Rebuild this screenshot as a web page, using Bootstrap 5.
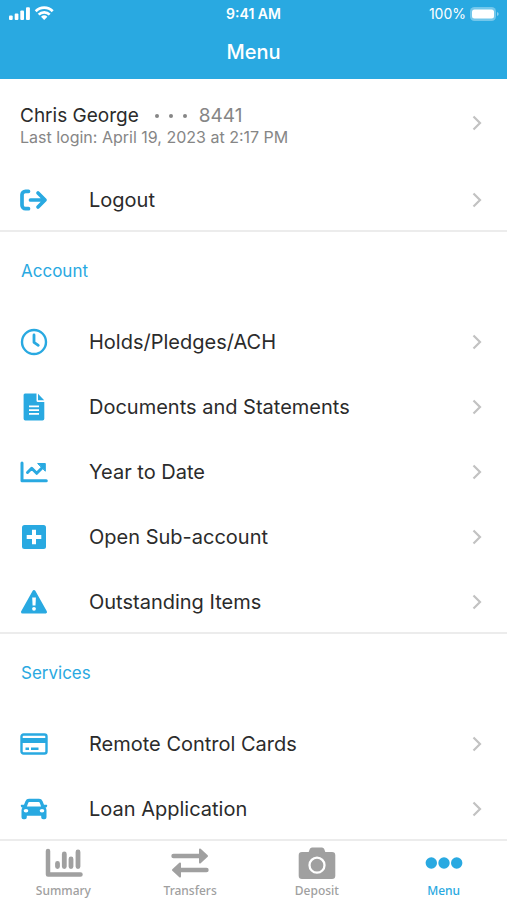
<!DOCTYPE html>
<html lang="en">
<head>
<meta charset="utf-8">
<meta name="viewport" content="width=device-width, initial-scale=1">
<title>Menu</title>
<link href="https://cdn.jsdelivr.net/npm/bootstrap@5.3.0/dist/css/bootstrap.min.css" rel="stylesheet">
<style>
  :root { --brand: #29a9e1; --ink: #2b2b2b; --muted: #868686; --tab: #a0a0a0; }
  body { font-family: Inter, "Liberation Sans", sans-serif; color: var(--ink); background: #fff; }
  .app-header { background: var(--brand); color: #fff; }
  .status-bar { height: 28px; font-size: 14px; line-height: 20px; padding: 0 8px; }
  .status-bar > div { flex: 1 1 0; }
  .page-title { height: 51px; font-size: 20px; line-height: 24px; padding-top: 12px; font-weight: 500; }
  .app-body { min-height: 0; scrollbar-width: none; }
  .app-body::-webkit-scrollbar { display: none; }
  .menu-section { box-shadow: inset 0 -2px #ececec; }
  .section-title { height: 77px; padding: 0 21px; font-size: 17px; line-height: 24px; color: var(--brand); }
  .menu-row { height: 65px; padding: 0 25px 0 20px; font-size: 20px; line-height: 24px; color: var(--ink); }
  .menu-row .glyph { width: 28px; height: 28px; margin-right: 41px; color: var(--brand); }
  .user-row { height: 88px; }
  .user-text { padding-top: 6px; }
  .user-name { font-size: 19px; line-height: 22px; }
  .user-dots { gap: 10px; margin: 0 12px 0 16px; }
  .user-dots i { width: 4px; height: 4px; background: var(--muted); }
  .user-login { font-size: 16px; line-height: 20px; }
  .soft { color: var(--muted); }
  .chevron { width: 10px; height: 16px; color: #c2c2c2; }
  .tab-bar { height: 61px; border-top: 2px solid #ececec; font-family: "Noto Sans", sans-serif; }
  .tab-bar a { color: var(--tab); font-size: 12px; line-height: 16px; padding-top: 3px; gap: 3px; font-weight: 500; }
  .tab-bar a.active { color: var(--brand); }
  .tab-bar svg { width: 40px; height: 36px; }
</style>
<script src="https://cdn.jsdelivr.net/npm/bootstrap@5.3.0/dist/js/bootstrap.bundle.min.js"></script>
</head>
<body>
<svg class="d-none" aria-hidden="true">
  <symbol id="chev" viewBox="0 0 10 16"><path d="M1.500 1.500 8 8l-6.500 6.500" fill="none" stroke="currentColor" stroke-width="2.200"/></symbol>
</svg>
<div class="d-flex flex-column vh-100">
  <header class="app-header">
    <div class="status-bar d-flex align-items-center">
      <div class="d-flex align-items-center">
        <svg width="46" height="16" viewBox="0 0 46 16" fill="#fff" aria-label="Signal and Wi-Fi">
          <rect x="1" y="9.500" width="3.700" height="4.500" rx="1"/><rect x="6.700" y="7.500" width="3.700" height="6.500" rx="1"/>
          <rect x="12.300" y="4.500" width="3.700" height="9.500" rx="1"/><rect x="18" y="1.200" width="3.900" height="12.800" rx="1"/>
          <g fill="none" stroke="#fff" stroke-width="2.700"><path d="M27.700 5.200a12 12 0 0 1 17 0"/><path d="M30.700 8.600a7.700 7.700 0 0 1 11 0"/></g>
          <path d="M33 10.700a4.700 4.700 0 0 1 6.400 0L36.200 13.900z"/>
        </svg>
      </div>
      <span class="fw-semibold">9:41 AM</span>
      <div class="d-flex align-items-center justify-content-end gap-1">
        <span>100%</span>
        <svg width="29" height="14" viewBox="0 0 29 14" aria-label="Battery full">
          <rect x="0" y="0" width="26" height="14" rx="4.500" fill="#fff" opacity=".35"/><rect x="2" y="2.500" width="22" height="9" rx="2.500" fill="#fff"/>
          <path d="M27 5v4q1.700-.5 1.700-2T27 5z" fill="#fff" opacity=".45"/>
        </svg>
      </div>
    </div>
    <h1 class="page-title text-center m-0">Menu</h1>
  </header>

  <main class="app-body flex-fill overflow-auto">
    <section class="menu-section">
      <a href="#profile" class="menu-row user-row d-flex align-items-center text-decoration-none">
        <span class="user-text flex-fill">
          <span class="user-name d-flex align-items-center">Chris George
            <span class="user-dots d-flex"><i class="rounded-circle"></i><i class="rounded-circle"></i><i class="rounded-circle"></i></span>
            <span class="soft">8441</span></span>
          <span class="user-login soft d-block">Last login: April 19, 2023 at 2:17 PM</span>
        </span>
        <svg class="chevron"><use href="#chev"/></svg>
      </a>
      <button type="button" class="menu-row d-flex align-items-center w-100 border-0 bg-transparent text-start">
        <svg class="glyph" viewBox="0 0 28 28" fill="none" stroke="currentColor" stroke-width="3.700" stroke-linecap="round" stroke-linejoin="round"><path d="M8.500 5.300H5.500a3.500 3.500 0 0 0-3.500 3.500v10.400a3.500 3.500 0 0 0 3.500 3.500h3M10.500 14h14M18 7l7 7-7 7"/></svg>
        <span class="flex-fill">Logout</span><svg class="chevron"><use href="#chev"/></svg>
      </button>
    </section>

    <section class="menu-section">
      <h2 class="section-title d-flex align-items-center m-0 fw-normal">Account</h2>
      <a href="#holds" class="menu-row d-flex align-items-center text-decoration-none">
        <svg class="glyph" viewBox="0 0 28 28" fill="none" stroke="currentColor"><circle cx="14" cy="14" r="12" stroke-width="2.400"/><path d="M14 7v7.300l4.300 3" stroke-width="2.800" stroke-linecap="round" stroke-linejoin="round"/></svg>
        <span class="flex-fill">Holds/Pledges/ACH</span><svg class="chevron"><use href="#chev"/></svg>
      </a>
      <a href="#documents" class="menu-row d-flex align-items-center text-decoration-none">
        <svg class="glyph" viewBox="0 0 28 28" fill="currentColor"><path d="M5 .5h11.500V7.500q0 1.500 1.500 1.500h6.300v16.700q0 1.800-1.800 1.800H5.300q-1.700 0-1.700-1.700V2q0-1.500 1.400-1.500z"/><path d="M18 .7 24.200 7.300H18z"/><path d="M9 13.300h10M9 17.100h10M9 20.900h10" stroke="#fff" stroke-width="1.700"/></svg>
        <span class="flex-fill">Documents and Statements</span><svg class="chevron"><use href="#chev"/></svg>
      </a>
      <a href="#ytd" class="menu-row d-flex align-items-center text-decoration-none">
        <svg class="glyph" viewBox="0 0 28 28" fill="none" stroke="currentColor" stroke-width="3" stroke-linecap="round" stroke-linejoin="round"><path d="M2 5v17.700h24.300"/><path d="m7.500 14.500 4.200-4.200 5 5 6-6"/><path d="M18 5.500h7.300v7.300z" fill="currentColor" stroke-width="1"/></svg>
        <span class="flex-fill">Year to Date</span><svg class="chevron"><use href="#chev"/></svg>
      </a>
      <a href="#open" class="menu-row d-flex align-items-center text-decoration-none">
        <svg class="glyph" viewBox="0 0 28 28"><rect x="2" y="2" width="24" height="24" rx="2.500" fill="currentColor"/><path d="M14 6.700v14.600M6.700 14h14.600" stroke="#fff" stroke-width="4"/></svg>
        <span class="flex-fill">Open Sub-account</span><svg class="chevron"><use href="#chev"/></svg>
      </a>
      <a href="#outstanding" class="menu-row d-flex align-items-center text-decoration-none">
        <svg class="glyph" viewBox="0 0 28 28"><path d="M14 3.500 25.500 24H2.500z" fill="currentColor" stroke="currentColor" stroke-width="3" stroke-linejoin="round"/><path d="M12.200 9.500h3.700l-.4 8h-2.900z" fill="#fff"/><circle cx="14" cy="20.800" r="1.900" fill="#fff"/></svg>
        <span class="flex-fill">Outstanding Items</span><svg class="chevron"><use href="#chev"/></svg>
      </a>
    </section>

    <section>
      <h2 class="section-title d-flex align-items-center m-0 fw-normal">Services</h2>
      <a href="#cards" class="menu-row d-flex align-items-center text-decoration-none">
        <svg class="glyph" viewBox="0 0 28 28"><rect x="1.500" y="4.500" width="25" height="19" rx="2" fill="none" stroke="currentColor" stroke-width="2.400"/><path d="M1.500 8v5h25V8z" fill="currentColor"/><path d="M5.500 18.700h3.500M11 18.700h7.500" stroke="currentColor" stroke-width="2.400"/></svg>
        <span class="flex-fill">Remote Control Cards</span><svg class="chevron"><use href="#chev"/></svg>
      </a>
      <a href="#loan" class="menu-row d-flex align-items-center text-decoration-none">
        <svg class="glyph" viewBox="0 0 28 28"><path d="M9 3.800h10q2.600 0 3.600 2.400L24 9.700h2.500q.9 0 .7 1l-.3 1q-.2.700-1 .7h-.4q1 1.200 1 3v6.800q0 2-2 2h-1.300q-2 0-2-2v-1.400H6.800v1.400q0 2-2 2H3.500q-2 0-2-2v-6.800q0-1.800 1-3h-.4q-.8 0-1-.7l-.3-1q-.2-1 .7-1H4l1.400-3.500Q6.400 3.800 9 3.800z" fill="currentColor"/><path d="M9.300 7h9.400q.7 0 1 .7l1.400 3.700H6.900l1.400-3.700q.3-.7 1-.7z" fill="#fff"/><ellipse cx="6" cy="15.800" rx="2.300" ry="1.700" fill="#fff"/><ellipse cx="22" cy="15.800" rx="2.300" ry="1.700" fill="#fff"/></svg>
        <span class="flex-fill">Loan Application</span><svg class="chevron"><use href="#chev"/></svg>
      </a>
    </section>
  </main>

  <nav class="tab-bar row g-0 flex-shrink-0 bg-white" aria-label="Main">
    <a href="#summary" class="col d-flex flex-column align-items-center text-decoration-none">
      <svg viewBox="0 0 40 36" fill="none" stroke="currentColor" stroke-linecap="round" stroke-linejoin="round"><path d="M5 7v23.500h32.500" stroke-width="4.500"/><path d="M14.500 19.500v3M21.300 10v12.500M28 15v7.500M35 8v14.500" stroke-width="4.800"/></svg>
      <span>Summary</span></a>
    <a href="#transfers" class="col d-flex flex-column align-items-center text-decoration-none">
      <svg viewBox="0 0 40 36" fill="currentColor" stroke="currentColor" stroke-linecap="round" stroke-linejoin="round"><path d="M3.500 12H31M9 26h27.500" stroke-width="4.400"/><path d="m30 5.500 7 6.500-7 6.500zM10 19.500 3 26l7 6.500z" stroke-width="2"/></svg>
      <span>Transfers</span></a>
    <a href="#deposit" class="col d-flex flex-column align-items-center text-decoration-none">
      <svg viewBox="0 0 40 36"><path d="M5 8h6.700l1.100-2.900Q13.400 3.500 15 3.500h10q1.600 0 2.200 1.600L28.300 8H35q3.300 0 3.300 3.300v20.400q0 3.300-3.300 3.300H5q-3.300 0-3.300-3.300V11.300Q1.700 8 5 8z" fill="currentColor"/><circle cx="20" cy="21.200" r="7.500" fill="none" stroke="#fff" stroke-width="2.300"/></svg>
      <span>Deposit</span></a>
    <a href="#menu" class="active col d-flex flex-column align-items-center text-decoration-none" aria-current="page">
      <svg viewBox="0 0 40 36" fill="currentColor"><circle cx="7.300" cy="19" r="5.700"/><circle cx="20" cy="19" r="5.700"/><circle cx="32.700" cy="19" r="5.700"/></svg>
      <span>Menu</span></a>
  </nav>
</div>
</body>
</html>
